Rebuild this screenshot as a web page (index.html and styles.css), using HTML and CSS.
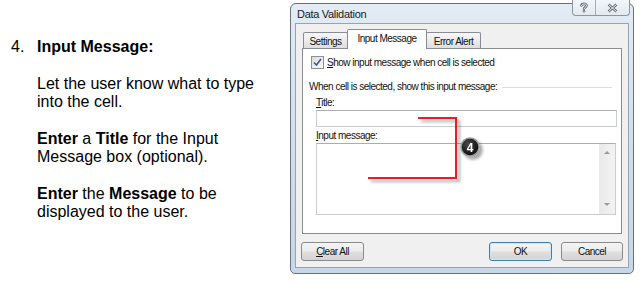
FILE: index.html
```html
<!DOCTYPE html>
<html lang="en">
<head>
  <meta charset="UTF-8" />
  <title>Data Validation - Input Message</title>
  <link rel="stylesheet" href="styles.css">
</head>
<body>

<div class="page">
  <section class="steps">
    <div class="step">
      <span class="num">4.</span>
      <div class="step-body">
        <h3>Input Message:</h3>
        <p>Let the user know what to type<br>into the cell.</p>
        <p><strong>Enter</strong> a <strong>Title</strong> for the Input<br>Message box (optional).</p>
        <p><strong>Enter</strong> the <strong>Message</strong> to be<br>displayed to the user.</p>
      </div>
    </div>
  </section>

  <div class="dialog">
    <div class="titlebar">
      <span class="title">Data Validation</span>
      <div class="caption-buttons">
        <span class="cap-btn help">
          <svg width="10" height="11" viewBox="0 0 10 11">
            <path d="M2.5 3.5 C2.5 1.5 7.5 1.2 7.5 3.6 C7.5 5.3 5 5.2 5 7" fill="none" stroke="#6b6f75" stroke-width="2.6" stroke-linecap="round"/>
            <path d="M2.5 3.5 C2.5 1.5 7.5 1.2 7.5 3.6 C7.5 5.3 5 5.2 5 7" fill="none" stroke="#f4f6f8" stroke-width="0.9" stroke-linecap="round"/>
            <circle cx="5" cy="9.3" r="1.3" fill="#6b6f75"/>
            <circle cx="5" cy="9.3" r="0.5" fill="#f4f6f8"/>
          </svg>
        </span>
        <span class="cap-btn close">
          <svg width="11" height="10" viewBox="0 0 11 10">
            <path d="M1.5 1.5 L9.5 8.5 M9.5 1.5 L1.5 8.5" fill="none" stroke="#6b6f75" stroke-width="2.6"/>
            <path d="M1.5 1.5 L9.5 8.5 M9.5 1.5 L1.5 8.5" fill="none" stroke="#f4f6f8" stroke-width="0.9"/>
          </svg>
        </span>
      </div>
    </div>

    <div class="client">
      <div class="tabs">
        <span class="tab tab-settings">Settings</span>
        <span class="tab tab-input active">Input Message</span>
        <span class="tab tab-error">Error Alert</span>
      </div>

      <div class="panel">
        <div class="check-row">
          <span class="checkbox">
            <svg width="9" height="9" viewBox="0 0 9 9">
              <path d="M1 4.5 L3.5 7 L8 1" fill="none" stroke="#3b5a9a" stroke-width="1.6"/>
            </svg>
          </span>
          <span><u>S</u>how input message when cell is selected</span>
        </div>

        <div class="group-label">
          <span>When cell is selected, show this input message:</span>
          <span class="rule"></span>
        </div>

        <div class="fields">
          <div class="field-label"><u>T</u>itle:</div>
          <div class="textbox"></div>
          <div class="field-label"><u>I</u>nput message:</div>
          <div class="msgbox">
            <div class="scrollbar">
              <span class="arrow up"></span>
              <span class="arrow down"></span>
            </div>
          </div>
        </div>
      </div>

      <div class="buttons">
        <span class="btn btn-clear"><u>C</u>lear All</span>
        <span class="spacer"></span>
        <span class="btn btn-ok">OK</span>
        <span class="btn btn-cancel">Cancel</span>
      </div>
    </div>
  </div>

  <svg class="callout" width="640" height="285" viewBox="0 0 640 285">
    <defs>
      <filter id="shade" x="-20%" y="-20%" width="150%" height="150%">
        <feDropShadow dx="3" dy="3" stdDeviation="1.5" flood-color="#000" flood-opacity="0.35"/>
      </filter>
      <radialGradient id="ball" cx="40%" cy="35%" r="70%">
        <stop offset="0" stop-color="#4a4a4a"/>
        <stop offset="1" stop-color="#050505"/>
      </radialGradient>
    </defs>
    <path d="M418 118 H456 V178 H368" fill="none" stroke="#ec1c24" stroke-width="2" filter="url(#shade)"/>
    <g filter="url(#shade)">
      <circle cx="470" cy="147" r="9" fill="url(#ball)" stroke="#9a9a9a" stroke-width="1.5"/>
      <text x="470" y="151.5" text-anchor="middle" class="badge-num">4</text>
    </g>
  </svg>
</div>

</body>
</html>
```

FILE: styles.css
```css
body {
  margin: 0;
  background: #fff;
  color: #000;
  font-family: 'Liberation Sans', Arial, sans-serif;
}
.page {
  position: relative;
  width: 640px;
  height: 285px;
  display: flex;
  overflow: hidden;
}

/* left hand instructions */
.steps {
  width: 290px;
  padding: 38px 0 0 11px;
  box-sizing: border-box;
  font-size: 16px;
  line-height: 18px;
}
.step {
  display: flex;
}
.num {
  width: 26px;
  flex: none;
}
.step h3 {
  margin: 0;
  font-size: 16px;
  line-height: 18px;
  font-weight: bold;
}
.step p {
  margin: 19px 0 0;
}

/* dialog window */
.dialog {
  width: 344px;
  height: 271px;
  margin-top: 3px;
  box-sizing: border-box;
  border: 1px solid #69737f;
  border-radius: 6px 6px 5px 5px;
  background: linear-gradient(to bottom, #e3ebf4, #cfdcec 60%, #c7d6e8);
  padding: 0 4px 5px 4px;
  display: flex;
  flex-direction: column;
  position: relative;
  font-family: 'Liberation Sans', Arial, sans-serif;
  font-size: 10px;
  letter-spacing: -0.5px;
  color: #111;
}
.titlebar {
  height: 19px;
  flex: none;
  display: flex;
  align-items: center;
  padding-left: 2px;
}
.title {
  font-size: 11px;
  letter-spacing: -0.3px;
  color: #1a1a1a;
}
.caption-buttons {
  position: absolute;
  top: -4px;
  left: 281px;
  display: flex;
  height: 15px;
  border: 1px solid #8a96a4;
  border-top: none;
  border-radius: 0 0 4px 4px;
  background: linear-gradient(to bottom, #f3f6f9, #e2e9f1);
}
.cap-btn {
  display: flex;
  align-items: center;
  justify-content: center;
}
.cap-btn.help {
  width: 22px;
  border-right: 1px solid #a3aebb;
}
.cap-btn.close {
  width: 33px;
}

.client {
  flex: 1;
  background: #f0f0f0;
  border: 1px solid #97a3b1;
  padding: 5px 6px 6px 6px;
  display: flex;
  flex-direction: column;
}

/* tabs */
.tabs {
  height: 19px;
  flex: none;
  display: flex;
  align-items: flex-end;
  padding-left: 1px;
}
.tab {
  height: 16px;
  box-sizing: border-box;
  border: 1px solid #898c95;
  border-bottom: none;
  border-radius: 2px 2px 0 0;
  background: linear-gradient(to bottom, #f7f7f7, #ebebeb 50%, #dedede);
  display: flex;
  align-items: center;
  justify-content: center;
  padding-top: 2px;
}
.tab-settings {
  width: 45px;
}
.tab-input {
  width: 80px;
  margin-left: -1px;
}
.tab-error {
  width: 55px;
  margin-left: -1px;
}
.tab.active {
  height: 20px;
  margin-bottom: -1px;
  background: #fff;
  position: relative;
  z-index: 1;
  padding-top: 0;
  padding-bottom: 2px;
}

.panel {
  height: 186px;
  flex: none;
  box-sizing: border-box;
  background: #fff;
  border: 1px solid #898c95;
  padding: 7px 4px 0 6px;
}
.check-row {
  display: flex;
  align-items: center;
  height: 13px;
  margin-left: 2px;
}
.checkbox {
  width: 13px;
  height: 13px;
  box-sizing: border-box;
  border: 1px solid #8e8f8f;
  background: linear-gradient(135deg, #dcdcdc, #fbfbfb);
  display: flex;
  align-items: center;
  justify-content: center;
  margin-right: 3px;
}
.group-label {
  display: flex;
  align-items: center;
  height: 13px;
  margin-top: 11px;
}
.rule {
  flex: 1;
  height: 1px;
  background: #d5dfe5;
  margin: 1px 5px 0 5px;
}
.fields {
  margin-left: 7px;
}
.field-label {
  height: 13px;
  line-height: 13px;
  margin-top: 3px;
}
.field-label + .msgbox,
.field-label + .textbox {
  margin-top: 1px;
}
.textbox {
  height: 17px;
  box-sizing: border-box;
  border: 1px solid #c9ccd1;
  border-top-color: #abadb3;
}
.fields .field-label:nth-child(3) {
  margin-top: 2px;
}
.msgbox {
  height: 72px;
  margin-right: 1px;
  box-sizing: border-box;
  border: 1px solid #c9ccd1;
  border-top-color: #abadb3;
  display: flex;
  justify-content: flex-end;
}
.scrollbar {
  width: 16px;
  background: linear-gradient(to right, #e9e9e9, #f3f3f3);
  display: flex;
  flex-direction: column;
  justify-content: space-between;
  align-items: center;
  padding: 7px 0 8px;
  box-sizing: border-box;
}
.arrow {
  width: 0;
  height: 0;
  border-left: 3px solid transparent;
  border-right: 3px solid transparent;
}
.arrow.up {
  border-bottom: 3px solid #9a9a9a;
}
.arrow.down {
  border-top: 3px solid #9a9a9a;
}

/* dialog buttons */
.buttons {
  display: flex;
  height: 19px;
  margin-top: 8px;
}
.spacer {
  flex: 1;
}
.btn {
  width: 63px;
  box-sizing: border-box;
  border: 1px solid #8a8a8a;
  border-radius: 3px;
  background: linear-gradient(to bottom, #f4f4f4, #ececec 48%, #dfdfdf 52%, #d3d3d3);
  display: flex;
  align-items: center;
  justify-content: center;
}
.btn-clear {
  margin-left: -1px;
}
.btn-ok {
  border-color: #3c7fb1;
  box-shadow: inset 0 0 0 1px #c7e8f8;
}
.btn-cancel {
  width: 62px;
  margin-left: 9px;
  margin-right: -1px;
}

/* red marker over the dialog */
.callout {
  position: absolute;
  left: 0;
  top: 0;
  pointer-events: none;
}
.badge-num {
  font-family: 'Liberation Sans', Arial, sans-serif;
  font-size: 12px;
  font-weight: bold;
  fill: #fff;
}
```
